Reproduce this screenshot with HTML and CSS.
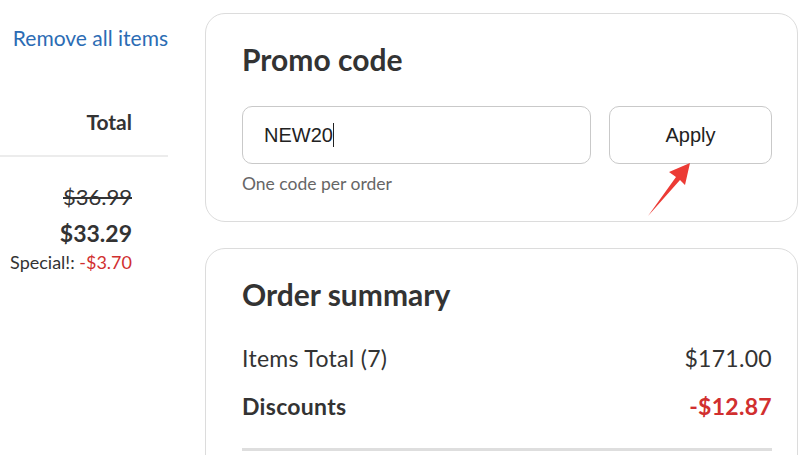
FILE: index.html
```html
<!DOCTYPE html>
<html lang="en">
<head>
  <meta charset="UTF-8" />
  <meta name="viewport" content="width=device-width, initial-scale=1.0" />
  <title>Cart</title>
  <link rel="stylesheet" href="styles.css">
</head>
<body>
  <div class="page">
    <div class="cart">
      <a class="remove-all" href="#">Remove all items</a>
      <div class="col-head">Total</div>
      <div class="line-total">
        <div class="old-price">$36.99</div>
        <div class="new-price">$33.29</div>
        <div class="special">Special!: <span class="minus">-$3.70</span></div>
      </div>
    </div>

    <div class="sidebar">
      <div class="card promo">
        <h2>Promo code</h2>
        <div class="promo-row">
          <div class="field">NEW20<span class="caret"></span></div>
          <button class="apply">Apply</button>
        </div>
        <div class="hint">One code per order</div>
        <svg class="arrow" width="60" height="70" viewBox="0 0 60 70">
          <polygon points="45,0 40,22 35,17 3,53 31,14 24,9" fill="#ec3b35" />
        </svg>
      </div>

      <div class="card summary">
        <h2>Order summary</h2>
        <div class="sum-row">
          <span>Items Total (7)</span>
          <span>$171.00</span>
        </div>
        <div class="sum-row strong">
          <span>Discounts</span>
          <span class="minus">-$12.87</span>
        </div>
        <div class="rule"></div>
      </div>
    </div>
  </div>
</body>
</html>
```

FILE: styles.css
```css
* {
  box-sizing: border-box;
}
body {
  margin: 0;
  height: 455px;
  overflow: hidden;
  background: #fff;
  font-family: Lato, 'Noto Sans', sans-serif;
  color: #333;
}
.page {
  display: flex;
}
.cart {
  width: 168px;
  flex-shrink: 0;
  display: flex;
  flex-direction: column;
  text-align: right;
}
.remove-all {
  display: block;
  margin-top: 25px;
  font-size: 21px;
  line-height: 25px;
  color: #2b6cb4;
  text-decoration: none;
}
.col-head {
  margin-top: 59px;
  padding-right: 36px;
  padding-bottom: 21px;
  font-size: 21px;
  font-weight: 700;
  line-height: 25px;
  border-bottom: 2px solid #ececec;
}
.line-total {
  padding-right: 36px;
  padding-top: 27px;
}
.old-price {
  font-size: 22px;
  line-height: 26px;
  text-decoration: line-through;
}
.new-price {
  margin-top: 10px;
  font-size: 23px;
  font-weight: 700;
  line-height: 27px;
}
.special {
  margin-top: 5px;
  font-size: 18px;
  line-height: 21px;
}
.minus {
  color: #d12f2f;
}

.sidebar {
  flex: 1;
  margin-left: 37px;
  margin-right: 2px;
  padding-top: 13px;
  display: flex;
  flex-direction: column;
  gap: 26px;
}
.card {
  position: relative;
  border: 1px solid #dcdcdc;
  border-radius: 20px;
  padding: 27px 25px 27px 36px;
}
.card h2 {
  margin: 0;
  font-size: 30px;
  font-weight: 700;
  line-height: 36px;
  color: #333;
}
.promo-row {
  display: flex;
  gap: 18px;
  margin-top: 29px;
}
.field {
  flex: 1;
  height: 58px;
  border: 1px solid #c9c9c9;
  border-radius: 10px;
  padding: 0 21px;
  display: flex;
  align-items: center;
  font-family: 'Liberation Sans', Arial, sans-serif;
  font-size: 20px;
  color: #222;
}
.caret {
  display: inline-block;
  width: 1px;
  height: 24px;
  background: #222;
}
.apply {
  width: 163px;
  height: 58px;
  border: 1px solid #c9c9c9;
  border-radius: 10px;
  background: #fff;
  font-family: 'Liberation Sans', Arial, sans-serif;
  font-size: 20px;
  color: #222;
}
.hint {
  margin-top: 9px;
  font-size: 17.5px;
  line-height: 21px;
  color: #666;
}
.arrow {
  position: absolute;
  left: 439px;
  top: 149px;
}
.summary {
  padding-bottom: 40px;
}
.summary h2 {
  margin-bottom: 22px;
}
.sum-row {
  display: flex;
  justify-content: space-between;
  padding: 12px 0;
  font-size: 23px;
  letter-spacing: 0.3px;
  line-height: 24px;
}
.sum-row.strong {
  font-weight: 700;
}
.rule {
  margin-top: 18px;
  height: 3px;
  background: #dedede;
}
```
